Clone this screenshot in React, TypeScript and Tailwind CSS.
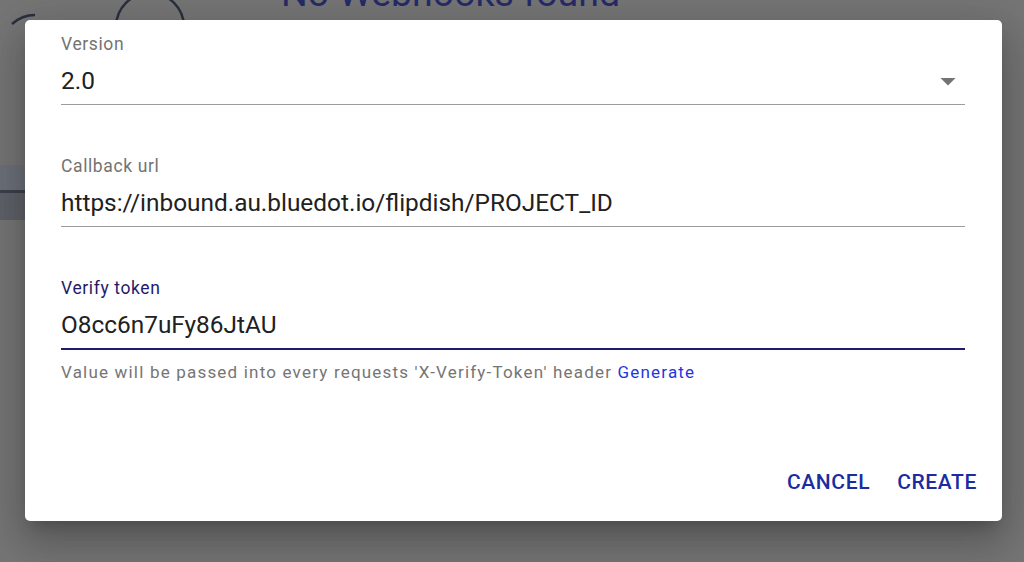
import React from 'react';

const font = { fontFamily: 'Roboto, "Noto Sans", Arial, sans-serif' };

function Field({
  label,
  value,
  focused = false,
  select = false,
  className = '',
}: {
  label: string;
  value: string;
  focused?: boolean;
  select?: boolean;
  className?: string;
}) {
  return (
    <div className={className}>
      <div
        className={`text-[17.5px] leading-[20px] tracking-[0.035em] ${
          focused ? 'text-[#1f1c6c]' : 'text-[#737373]'
        }`}
      >
        {label}
      </div>
      <div
        className={`mt-[12px] pb-[8px] ${
          focused ? 'border-b-2 border-[#1f1c6c]' : 'border-b border-[#9c9c9c]'
        }`}
      >
        <div className="flex h-[30px] items-center justify-between">
          <span className="text-[24.4px] leading-[30px] text-[#212121]">{value}</span>
          {select && (
            <svg width="36" height="36" viewBox="0 0 24 24" className="shrink-0 -mr-[1px]">
              <path d="M7 10l5 5 5-5z" fill="#737373" />
            </svg>
          )}
        </div>
      </div>
    </div>
  );
}

export default function App() {
  return (
    <div className="relative h-[562px] w-[1024px] overflow-hidden bg-[#757575]" style={font}>
      {/* page behind the backdrop */}
      <div className="flex flex-col">
        <div className="-mt-[28px] flex pl-[281px]">
          <span className="text-[37.5px] leading-[42px] text-[#252b68]">No Webhooks found</span>
        </div>
        <div className="mt-[151px] w-[400px]">
          <div className="h-[25px] bg-[#6c7079]" />
          <div className="h-[3px] bg-[#3b404c]" />
          <div className="h-[27px] bg-[#5f6169]" />
        </div>
      </div>

      <svg className="absolute left-0 top-0" width="220" height="30" viewBox="0 0 220 30">
        <circle cx="150" cy="27" r="34" fill="none" stroke="#2b3040" strokeWidth="2.5" />
        <path d="M12 24 Q22 15 35 15" fill="none" stroke="#2b3040" strokeWidth="2.5" />
      </svg>

      {/* dialog */}
      <div className="absolute left-[25px] top-[20px] flex h-[501px] w-[977px] flex-col rounded-[5px] bg-white pl-[36px] pr-[37px] pt-[14px] shadow-[0_11px_15px_-7px_rgba(0,0,0,0.2),0_24px_38px_3px_rgba(0,0,0,0.14),0_9px_46px_8px_rgba(0,0,0,0.12)]">
        <Field label="Version" value="2.0" select />
        <Field label="Callback url" value="https://inbound.au.bluedot.io/flipdish/PROJECT_ID" className="mt-[51px]" />
        <Field label="Verify token" value="O8cc6n7uFy86JtAU" focused className="mt-[51px]" />
        <p className="mt-[12px] text-[17px] leading-[20px] tracking-[0.07em] text-[#757575]">
          Value will be passed into every requests 'X-Verify-Token' header{' '}
          <span className="text-[#1f35e3]">Generate</span>
        </p>
        <div className="mt-auto mb-[27px] -mr-[12px] flex justify-end gap-[27px]">
          <button className="text-[21px] font-medium uppercase leading-[24px] tracking-[0.03em] text-[#1a2d9f]">
            Cancel
          </button>
          <button className="text-[21px] font-medium uppercase leading-[24px] tracking-[0.03em] text-[#1a2d9f]">
            Create
          </button>
        </div>
      </div>
    </div>
  );
}
